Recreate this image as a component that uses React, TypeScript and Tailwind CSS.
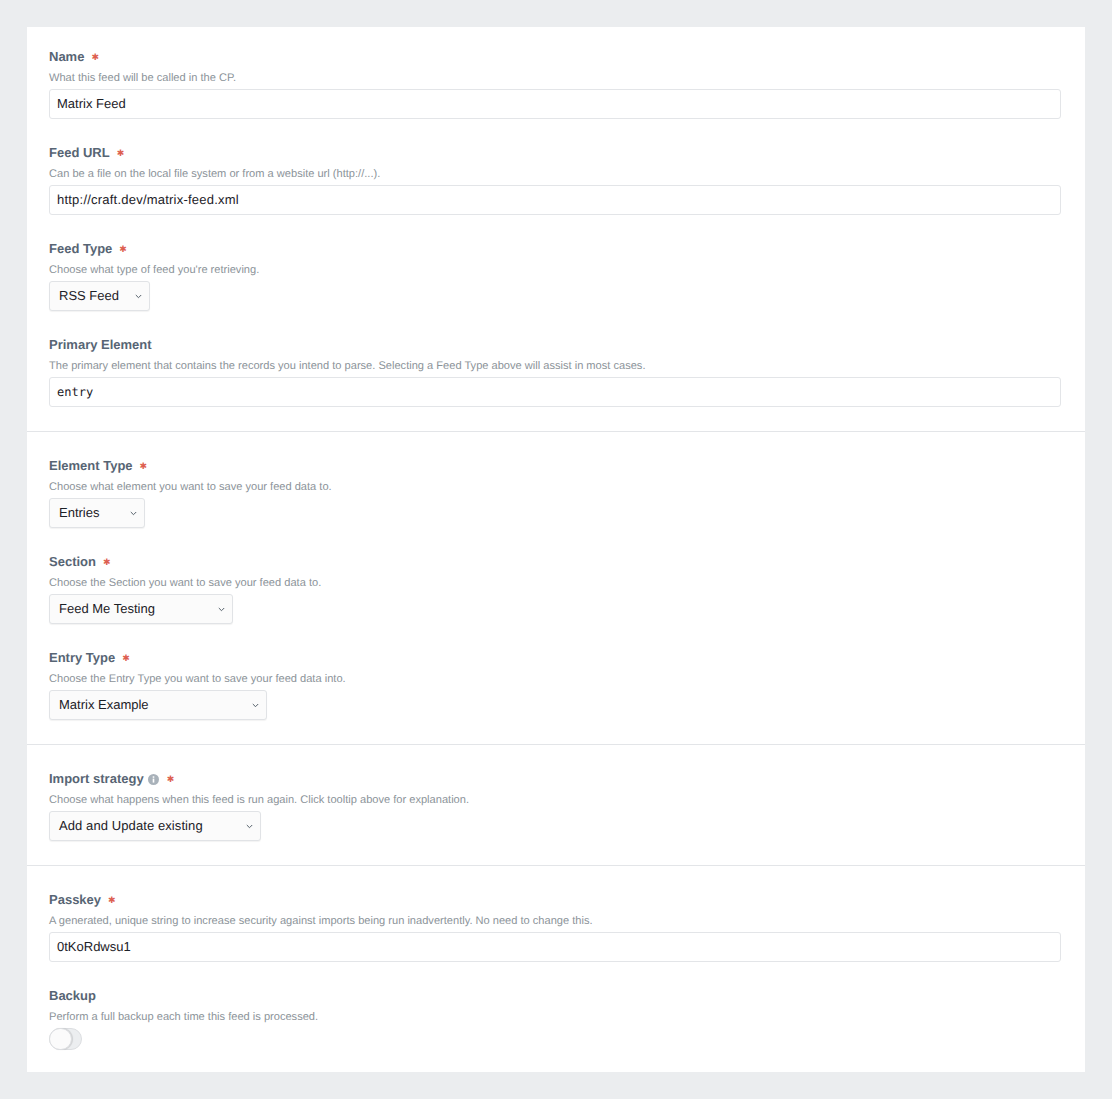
function Star() {
  return <span className="ml-[7px] text-[9px] leading-none text-[#dd5f50] font-['DejaVu_Sans',sans-serif] relative top-[1px]">✱</span>;
}
function Head({ label, desc, req, info }: { label: string; desc: string; req?: boolean; info?: boolean }) {
  return (
    <div className="h-[40px]">
      <div className="flex items-center h-[16px] text-[13px] font-bold text-[#576574] leading-[16px] [text-rendering:geometricPrecision]">
        <span>{label}</span>
        {info && (
          <svg className="ml-[4px] mr-[1px]" width="11" height="11" viewBox="0 0 11 11">
            <circle cx="5.5" cy="5.5" r="5.5" fill="#a9b2ba" />
            <rect x="4.7" y="4.6" width="1.6" height="4" fill="#fff" />
            <rect x="4.7" y="2.3" width="1.6" height="1.5" fill="#fff" />
          </svg>
        )}
        {req && <Star />}
      </div>
      <div className="mt-[6px] text-[11.08px] leading-[14px] text-[#8b9399] [text-rendering:geometricPrecision]">{desc}</div>
    </div>
  );
}
function Input({ value, mono, track }: { value: string; mono?: boolean; track?: boolean }) {
  return (
    <div className={`h-[30px] rounded-[3px] border border-[#e3e5e8] bg-white pl-[7px] flex items-center text-[#1c2127] [text-rendering:geometricPrecision] ${track ? "tracking-[0.22px]" : ""} ${mono ? "text-[12px] font-['DejaVu_Sans_Mono',monospace]" : "text-[13px]"}`}>
      {value}
    </div>
  );
}
function Select({ value, w, track }: { value: string; w: string; track?: boolean }) {
  return (
    <div className={`h-[30px] ${w} rounded-[3px] border border-[#e1e3e6] bg-[#fbfbfb] shadow-[0_1px_1px_rgba(0,0,0,0.05)] pl-[9px] pr-[7px] flex items-center justify-between text-[13px] text-[#1c2127] [text-rendering:geometricPrecision] ${track ? "tracking-[0.09px]" : ""}`}>
      <span>{value}</span>
      <svg width="7" height="5" viewBox="0 0 7 5" fill="none" stroke="#55606a" strokeWidth="1">
        <path d="M0.8 1 L3.5 3.7 L6.2 1" />
      </svg>
    </div>
  );
}
function Field({ label, desc, req, info, children, mb = "mb-[26px]" }: { label: string; desc: string; req?: boolean; info?: boolean; children: React.ReactNode; mb?: string }) {
  return (
    <div className={mb}>
      <Head label={label} desc={desc} req={req} info={info} />
      {children}
    </div>
  );
}
function Hr() {
  return <div className="h-px bg-[#e3e5e8] -ml-[22px] -mr-[24px] mb-[26px]" />;
}
export default function App() {
  return (
    <div className="min-h-[1099px] bg-[#ebedef] p-[27px] font-['Liberation_Sans',Arial,sans-serif]">
      <div className="h-[1045px] bg-white pl-[22px] pr-[24px] pt-[22px]">
        <Field label="Name" desc="What this feed will be called in the CP." req><Input value="Matrix Feed" /></Field>
        <Field label="Feed URL" desc="Can be a file on the local file system or from a website url (http://...)." req><Input value="http://craft.dev/matrix-feed.xml" track /></Field>
        <Field label="Feed Type" desc="Choose what type of feed you're retrieving." req><Select value="RSS Feed" w="w-[101px]" /></Field>
        <Field label="Primary Element" desc="The primary element that contains the records you intend to parse. Selecting a Feed Type above will assist in most cases." mb="mb-[24px]"><Input value="entry" mono /></Field>
        <Hr />
        <Field label="Element Type" desc="Choose what element you want to save your feed data to." req><Select value="Entries" w="w-[96px]" /></Field>
        <Field label="Section" desc="Choose the Section you want to save your feed data to." req><Select value="Feed Me Testing" w="w-[184px]" /></Field>
        <Field label="Entry Type" desc="Choose the Entry Type you want to save your feed data into." req mb="mb-[24px]"><Select value="Matrix Example" w="w-[218px]" /></Field>
        <Hr />
        <Field label="Import strategy" desc="Choose what happens when this feed is run again. Click tooltip above for explanation." req info mb="mb-[24px]"><Select value="Add and Update existing" w="w-[212px]" track /></Field>
        <Hr />
        <Field label="Passkey" desc="A generated, unique string to increase security against imports being run inadvertently. No need to change this." req><Input value="0tKoRdwsu1" /></Field>
        <Head label="Backup" desc="Perform a full backup each time this feed is processed." />
        <div className="relative w-[33px] h-[22px] rounded-full bg-[#eceef0] border border-[#dcdee1]">
          <div className="absolute -left-px -top-px w-[23px] h-[22px] rounded-full bg-[#fbfbfb] border border-[#dcdee1] shadow-[1px_0_1px_rgba(0,0,0,0.12)]" />
        </div>
      </div>
    </div>
  );
}
